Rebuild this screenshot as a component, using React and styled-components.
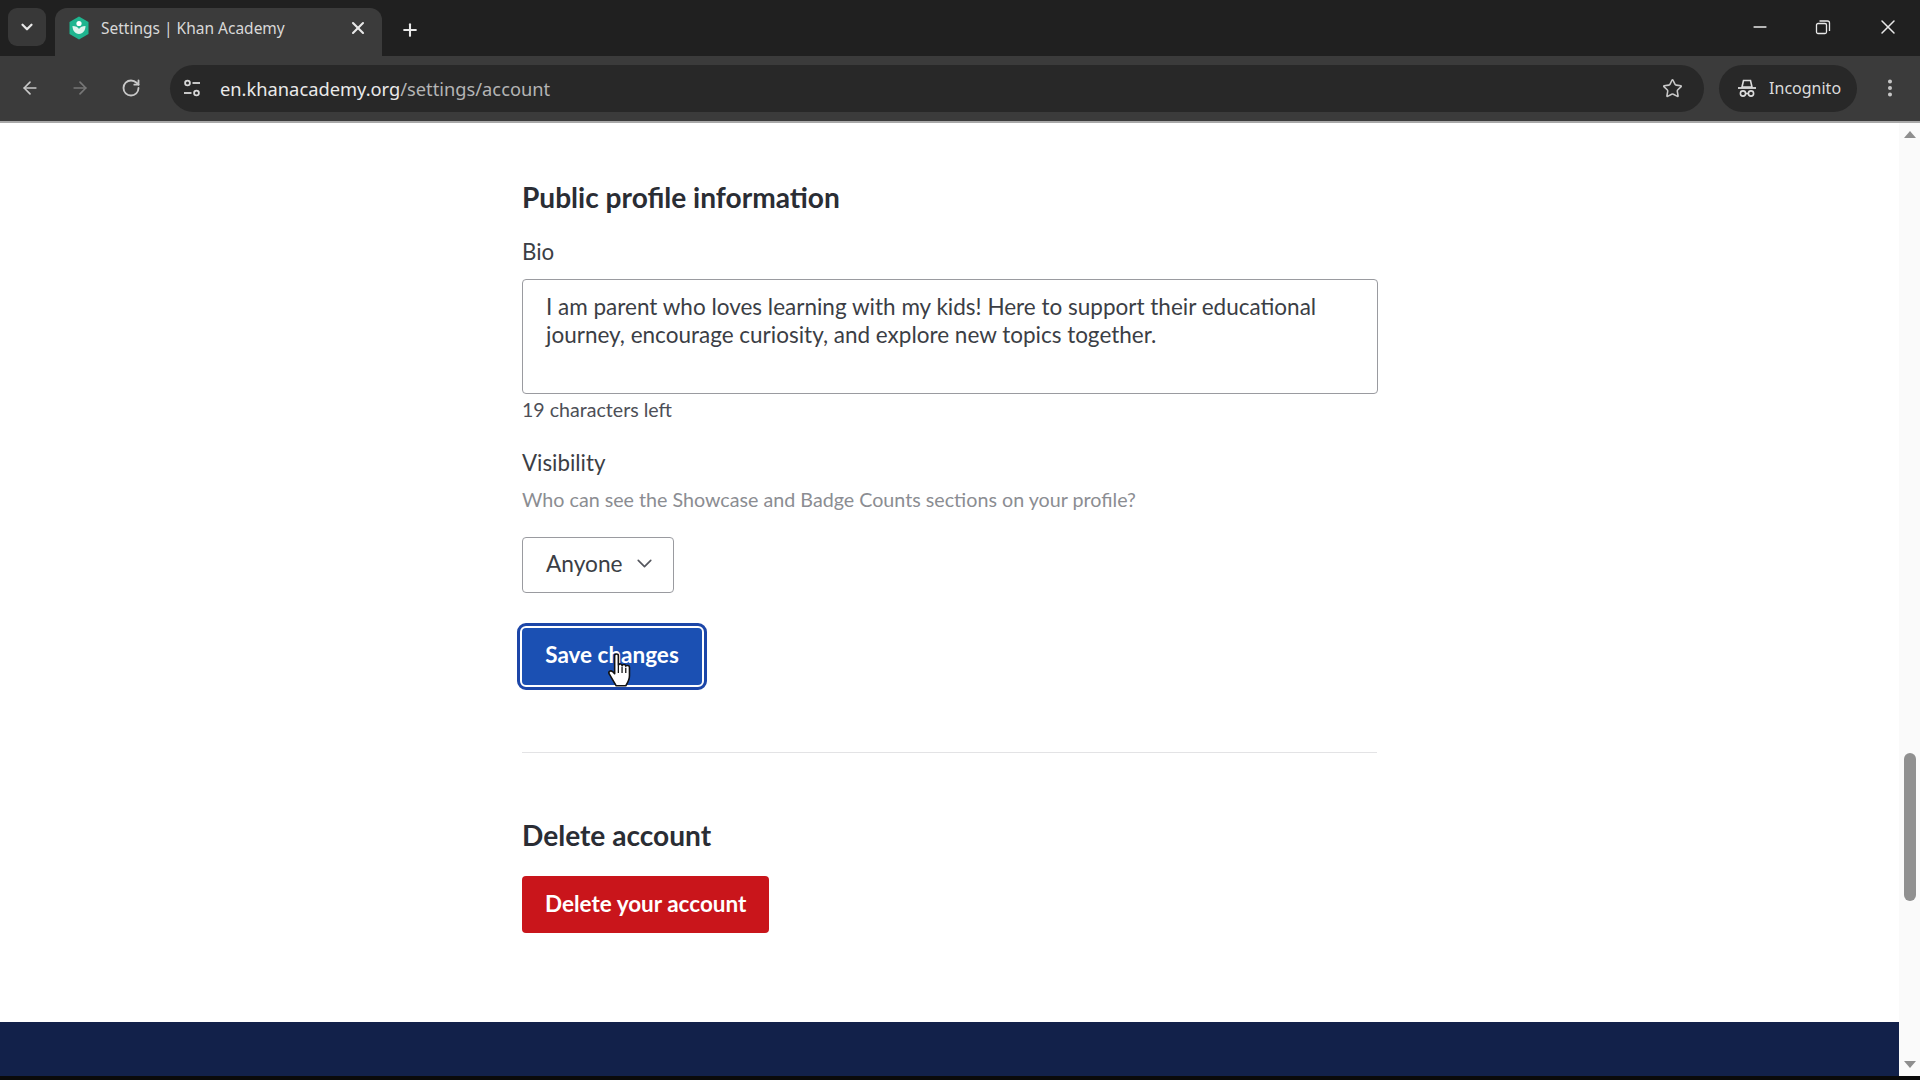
import styled, { createGlobalStyle } from "styled-components";
import { ArrowLeft, ArrowRight, RotateCw, Star, ChevronDown, X, Plus, Minus, MoreVertical } from "lucide-react";

const GlobalStyle = createGlobalStyle`
  html, body {
    margin: 0;
    padding: 0;
    height: 100%;
    overflow: hidden;
    background: #fff;
  }
  * {
    box-sizing: border-box;
  }
`;

const Screen = styled.div`
  width: 1920px;
  height: 1080px;
  display: flex;
  flex-direction: column;
  overflow: hidden;
  background: #000;
`;

const TabStrip = styled.div`
  height: 56px;
  flex: none;
  display: flex;
  align-items: flex-end;
  background: #202020;
  padding-left: 8px;
  color: #e4e4e4;
  font-family: "Noto Sans", sans-serif;
`;

const TabListButton = styled.div`
  width: 38px;
  height: 38px;
  margin: 0 9px 10px 0;
  border-radius: 9px;
  background: #383838;
  display: flex;
  align-items: center;
  justify-content: center;
`;

const Tab = styled.div`
  width: 327px;
  height: 48px;
  background: #3b3b3b;
  border-radius: 12px 12px 0 0;
  display: flex;
  align-items: center;
  padding: 0 14px 8px 13px;
  font-size: 15.5px;
`;

const TabTitle = styled.span`
  flex: 1;
  margin-left: 11px;
  white-space: nowrap;
  color: #d8d8d8;
`;

const NewTab = styled.div`
  margin: 0 0 16px 18px;
  display: flex;
`;

const WindowControls = styled.div`
  margin: 0 20px 17px auto;
  display: flex;
  align-items: center;
  gap: 45px;
`;

const Toolbar = styled.div`
  height: 67px;
  flex: none;
  display: flex;
  align-items: center;
  background: #3b3b3b;
  border-bottom: 2px solid #a8a8a8;
  padding: 0 19px 1px 20px;
  font-family: "Noto Sans", sans-serif;
`;

const NavButton = styled.div`
  width: 20px;
  display: flex;
  justify-content: center;
  margin-right: ${(props) => props.$gap}px;
`;

const AddressBar = styled.div`
  width: 1535px;
  height: 47px;
  border-radius: 24px;
  background: #282828;
  display: flex;
  align-items: center;
  padding: 0 21px 0 10px;
`;

const SiteInfo = styled.div`
  width: 24px;
  display: flex;
  justify-content: center;
  margin-right: 16px;
`;

const UrlHost = styled.span`
  color: #eaeaea;
  font-size: 18.3px;
`;

const UrlPath = styled.span`
  color: #b4b4b4;
  font-size: 18.3px;
  flex: 1;
`;

const IncognitoPill = styled.div`
  width: 138px;
  height: 47px;
  margin: 0 22px 0 15px;
  border-radius: 24px;
  background: #282828;
  color: #dcdcdc;
  font-size: 16px;
  display: flex;
  align-items: center;
  padding-left: 18px;
  gap: 12px;
`;

const Viewport = styled.div`
  flex: 1;
  min-height: 0;
  display: flex;
`;

const Page = styled.div`
  flex: 1;
  min-width: 0;
  display: flex;
  flex-direction: column;
  background: #fff;
`;

const Content = styled.main`
  flex: 1;
  width: 855px;
  margin-left: 522px;
  padding-top: 56px;
  font-family: "Lato", sans-serif;
  color: #21242c;
`;

const SectionTitle = styled.h2`
  margin: 0;
  font-size: 28.1px;
  line-height: 36px;
  font-weight: 700;
  color: #2a2d34;
`;

const FieldLabel = styled.label`
  display: block;
  font-size: 22.3px;
  line-height: 28px;
  color: #3b3e45;
  margin-top: ${(props) => props.$top}px;
`;

const BioInput = styled.textarea`
  display: block;
  width: 856px;
  height: 115px;
  margin-top: 13px;
  padding: 13px 23px;
  border: 1.5px solid #9a9ba0;
  border-radius: 4px;
  font-family: inherit;
  font-size: 22.5px;
  line-height: 28px;
  color: #3b3e45;
  resize: none;
  outline: none;
`;

const Counter = styled.div`
  margin-top: 4px;
  font-size: 19.6px;
  line-height: 24px;
  color: #4d4f57;
`;

const HelpText = styled.div`
  margin-top: 11px;
  font-size: 19.7px;
  line-height: 24px;
  color: #8b8d92;
`;

const SelectBox = styled.div`
  width: 152px;
  height: 56px;
  margin-top: 25px;
  border: 1.5px solid #9a9ba0;
  border-radius: 4px;
  display: flex;
  align-items: center;
  justify-content: space-between;
  padding: 0 16px 3px 23px;
  font-size: 22.7px;
  color: #3b3e45;
`;

const Button = styled.button`
  position: relative;
  display: block;
  height: ${(props) => props.$height}px;
  border: none;
  border-radius: 4px;
  padding: 0 23px 2px;
  background: ${(props) => props.$bg};
  color: #fff;
  font-family: inherit;
  font-size: 22.5px;
  font-weight: 700;
`;

const SaveButton = styled(Button)`
  margin-top: 35px;
  width: 180px;
  padding-bottom: 4px;
  outline: 3px solid #1c46a8;
  outline-offset: 2px;
  box-shadow: 0 0 0 2px #fff;
`;

const Cursor = styled.svg`
  position: absolute;
  left: 85px;
  top: 25px;
`;

const Divider = styled.hr`
  margin: 67px 0 0;
  border: none;
  border-top: 1.5px solid #e3e3e5;
`;

const DeleteTitle = styled(SectionTitle)`
  margin-top: 64px;
`;

const DeleteButton = styled(Button)`
  margin-top: 23px;
`;

const Footer = styled.footer`
  height: 54px;
  flex: none;
  background: #12214a;
`;

const Scrollbar = styled.div`
  width: 21px;
  flex: none;
  display: flex;
  flex-direction: column;
  align-items: center;
  background: #fafafa;
`;

const ScrollArrow = styled.div`
  width: 0;
  height: 0;
  border-left: 6px solid transparent;
  border-right: 6px solid transparent;
  margin-top: ${(props) => props.$top}px;
  ${(props) =>
    props.$down
      ? "border-top: 7px solid #8e8e8e;"
      : "border-bottom: 7px solid #8e8e8e;"}
`;

const ScrollThumb = styled.div`
  width: 12px;
  height: 148px;
  margin-top: 615px;
  border-radius: 6px;
  background: #909090;
`;

const BottomEdge = styled.div`
  height: 4px;
  flex: none;
  background: #0a0a0a;
`;

function KhanLogo() {
  return (
    <svg width="22" height="24" viewBox="0 0 22 24">
      <path d="M11 0.5 20.5 6v12L11 23.5 1.500 18V6z" fill="#1fb58f" />
      <circle cx="11" cy="7.500" r="2.600" fill="#fff" />
      <path d="M4.500 10c0 4.500 2.500 7.500 6.500 8 4-.5 6.500-3.500 6.500-8-3 0-5.500 1-6.500 3-1-2-3.500-3-6.500-3z" fill="#dff5ee" />
    </svg>
  );
}

function RestoreIcon() {
  return (
    <svg width="16" height="16" viewBox="0 0 16 16" fill="none" stroke="#e8e8e8" strokeWidth="1.300">
      <rect x="1.500" y="4.500" width="10" height="10" rx="1.500" />
      <path d="M4.500 2h8a2 2 0 0 1 2 2v8" />
    </svg>
  );
}

function TuneIcon() {
  return (
    <svg width="20" height="20" viewBox="0 0 20 20" fill="none" stroke="#d8d8d8" strokeWidth="1.800">
      <circle cx="5.500" cy="5" r="2.400" />
      <path d="M10.500 5H18" />
      <circle cx="14.500" cy="15" r="2.400" />
      <path d="M2 15h7.500" />
    </svg>
  );
}

function IncognitoIcon() {
  return (
    <svg width="20" height="20" viewBox="0 0 20 20" fill="none" stroke="#dcdcdc" strokeWidth="1.600">
      <path d="M5 9 6.500 2.500h7L15 9z" />
      <path d="M1 10h18" strokeWidth="1.800" />
      <circle cx="6" cy="15.500" r="2.600" />
      <circle cx="14" cy="15.500" r="2.600" />
      <path d="M8.600 15.500h2.800" />
    </svg>
  );
}

function HandCursor() {
  return (
    <Cursor width="28" height="36" viewBox="0 0 26 34">
      <path
        d="M7 2.500c0-2 3.500-2 3.500 0v9c.5-1.500 3.500-1.500 3.500.5 .5-1.500 3.500-1.500 3.500.5 .5-1 3.500-1 3.500 1v8c0 4-2 7-3.500 9.500H8.500L2 20c-1.500-2 1-4 3-2.500l2 2z"
        fill="#fff"
        stroke="#111"
        strokeWidth="1.500"
        strokeLinejoin="round"
      />
      <path d="M10.500 12v7M14 13v6M17.500 14v5" stroke="#111" strokeWidth="1.200" />
    </Cursor>
  );
}

function App() {
  return (
    <Screen>
      <GlobalStyle />
      <TabStrip>
        <TabListButton>
          <ChevronDown size={18} color="#e8e8e8" strokeWidth={3} />
        </TabListButton>
        <Tab>
          <KhanLogo />
          <TabTitle>Settings | Khan Academy</TabTitle>
          <X size={20} color="#e8e8e8" strokeWidth={2.5} />
        </Tab>
        <NewTab>
          <Plus size={20} color="#e8e8e8" strokeWidth={2.5} />
        </NewTab>
        <WindowControls>
          <Minus size={20} color="#e8e8e8" />
          <RestoreIcon />
          <X size={24} color="#e8e8e8" strokeWidth={1.5} />
        </WindowControls>
      </TabStrip>
      <Toolbar>
        <NavButton $gap={30}>
          <ArrowLeft size={22} color="#c8c8c8" />
        </NavButton>
        <NavButton $gap={31}>
          <ArrowRight size={22} color="#777" />
        </NavButton>
        <NavButton $gap={29}>
          <RotateCw size={20} color="#c8c8c8" strokeWidth={2.2} />
        </NavButton>
        <AddressBar>
          <SiteInfo>
            <TuneIcon />
          </SiteInfo>
          <UrlHost>en.khanacademy.org</UrlHost>
          <UrlPath>/settings/account</UrlPath>
          <Star size={21} color="#c8c8c8" strokeWidth={1.8} />
        </AddressBar>
        <IncognitoPill>
          <IncognitoIcon />
          Incognito
        </IncognitoPill>
        <MoreVertical size={22} color="#c8c8c8" strokeWidth={2.4} />
      </Toolbar>
      <Viewport>
        <Page>
          <Content>
            <SectionTitle>Public profile information</SectionTitle>
            <FieldLabel $top={23}>Bio</FieldLabel>
            <BioInput
              readOnly
              defaultValue="I am parent who loves learning with my kids! Here to support their educational journey, encourage curiosity, and explore new topics together."
            />
            <Counter>19 characters left</Counter>
            <FieldLabel $top={27}>Visibility</FieldLabel>
            <HelpText>Who can see the Showcase and Badge Counts sections on your profile?</HelpText>
            <SelectBox>
              Anyone
              <ChevronDown size={25} color="#55575e" strokeWidth={1.6} />
            </SelectBox>
            <SaveButton $height={57} $bg="#1b50b3">
              Save changes
              <HandCursor />
            </SaveButton>
            <Divider />
            <DeleteTitle>Delete account</DeleteTitle>
            <DeleteButton $height={57} $bg="#c9151b">
              Delete your account
            </DeleteButton>
          </Content>
          <Footer />
        </Page>
        <Scrollbar>
          <ScrollArrow $top={8} />
          <ScrollThumb />
          <ScrollArrow $top={160} $down />
        </Scrollbar>
      </Viewport>
      <BottomEdge />
    </Screen>
  );
}

export default App;
